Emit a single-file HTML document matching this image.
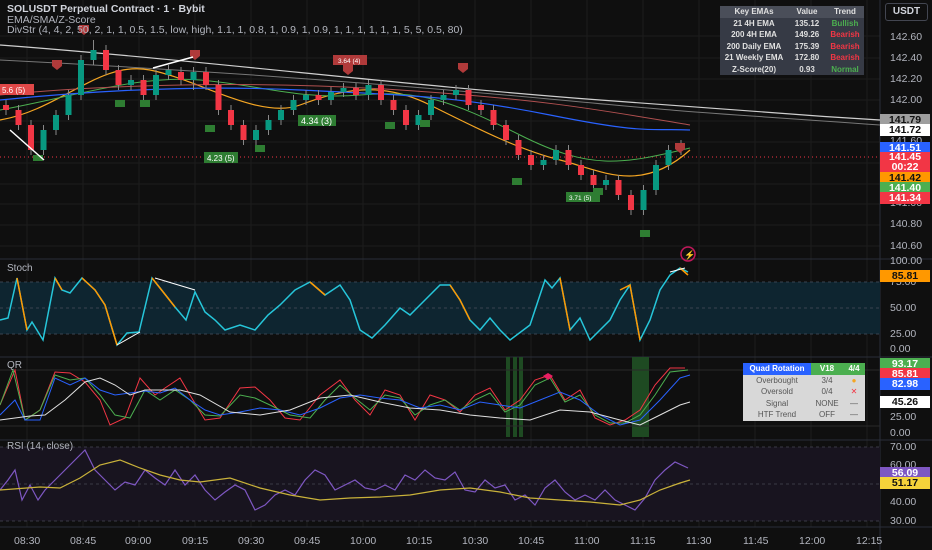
<!DOCTYPE html><html><head><meta charset="utf-8"><style>
body{margin:0;background:#0f0f0f;width:932px;height:550px;overflow:hidden;font-family:"Liberation Sans",sans-serif}
.t{position:absolute;color:#d1d4dc;white-space:nowrap;line-height:12px}
table{border-collapse:collapse;position:absolute;font-size:8px;font-weight:bold}
td{padding:0 3px;text-align:center;height:11.5px}
.pl{position:absolute;left:880px;width:50px;height:12px;font-size:10.5px;font-weight:bold;text-align:center;line-height:12px}
.ax{position:absolute;left:890px;font-size:10.5px;color:#b2b5be;line-height:12px}
.tx{position:absolute;top:535px;font-size:10.5px;color:#b2b5be;line-height:12px}
</style></head><body>
<svg width="932" height="550" style="position:absolute;left:0;top:0">
<g stroke="#1c1c1c" stroke-width="1">
<line x1="27" y1="0" x2="27" y2="527"/><line x1="83" y1="0" x2="83" y2="527"/><line x1="139" y1="0" x2="139" y2="527"/><line x1="195" y1="0" x2="195" y2="527"/><line x1="251" y1="0" x2="251" y2="527"/><line x1="307" y1="0" x2="307" y2="527"/><line x1="363" y1="0" x2="363" y2="527"/><line x1="419" y1="0" x2="419" y2="527"/><line x1="475" y1="0" x2="475" y2="527"/><line x1="531" y1="0" x2="531" y2="527"/><line x1="587" y1="0" x2="587" y2="527"/><line x1="643" y1="0" x2="643" y2="527"/><line x1="699" y1="0" x2="699" y2="527"/><line x1="755" y1="0" x2="755" y2="527"/><line x1="811" y1="0" x2="811" y2="527"/><line x1="867" y1="0" x2="867" y2="527"/>
<line x1="0" y1="36" x2="880" y2="36"/><line x1="0" y1="58" x2="880" y2="58"/><line x1="0" y1="79" x2="880" y2="79"/><line x1="0" y1="100" x2="880" y2="100"/><line x1="0" y1="121" x2="880" y2="121"/><line x1="0" y1="142" x2="880" y2="142"/><line x1="0" y1="163" x2="880" y2="163"/><line x1="0" y1="184" x2="880" y2="184"/><line x1="0" y1="204" x2="880" y2="204"/><line x1="0" y1="225" x2="880" y2="225"/><line x1="0" y1="246" x2="880" y2="246"/>
</g>
<g stroke="#2a2e39" stroke-width="1"><line x1="0" y1="259" x2="932" y2="259"/><line x1="0" y1="357" x2="932" y2="357"/><line x1="0" y1="440" x2="932" y2="440"/><line x1="0" y1="527" x2="932" y2="527"/><line x1="880" y1="0" x2="880" y2="550"/></g>
<rect x="0" y="282" width="880" height="52" fill="#0e2530"/>
<g stroke="#3a4450" stroke-dasharray="3,3"><line x1="0" y1="282" x2="880" y2="282"/><line x1="0" y1="308" x2="880" y2="308"/><line x1="0" y1="334" x2="880" y2="334"/></g>
<rect x="506" y="357" width="4" height="80" fill="#1e4a22"/><rect x="513" y="357" width="4" height="80" fill="#1e4a22"/><rect x="519" y="357" width="4" height="80" fill="#1e4a22"/><rect x="632" y="357" width="17" height="80" fill="#1e4a22"/>
<g stroke="#2a2a2a"><line x1="0" y1="370" x2="880" y2="370"/><line x1="0" y1="426" x2="880" y2="426"/></g>
<rect x="0" y="447" width="880" height="74" fill="#18141f"/>
<g stroke="#3a3a44" stroke-dasharray="3,3"><line x1="0" y1="447" x2="880" y2="447"/><line x1="0" y1="484" x2="880" y2="484"/><line x1="0" y1="521" x2="880" y2="521"/></g>
<line x1="0" y1="157" x2="880" y2="157" stroke="#f23645" stroke-dasharray="1,3"/>
<path d="M0 45 C200 60 400 85 600 100 S800 115 880 120" stroke="#cfcfcf" fill="none" stroke-width="1.2"/>
<path d="M0 60 C200 70 400 85 560 100 S700 112 880 125" stroke="#777" fill="none"/>
<path d="M0 120 C60 110 100 60 150 70 S260 120 300 105 S380 80 430 105 S520 150 560 160 S640 195 690 150" stroke="#f5a623" fill="none" stroke-width="1.2"/>
<path d="M0 110 C80 95 140 75 200 80 S300 100 360 95 S450 100 520 135 S620 165 690 148" stroke="#4caf50" fill="none"/>
<path d="M0 100 C100 90 200 85 300 90 S450 95 550 115 S650 128 690 130" stroke="#2962ff" fill="none" stroke-width="1.2"/>
<path d="M0 95 C100 85 250 80 400 90 S600 110 690 125" stroke="#b05050" fill="none"/>
<g stroke-width="1">
<path d="M6 100V115M18.5 105V130M31 120V155M43.5 125V155M56 110V135M68.5 90V120M81 55V100M93.5 40V65M106 45V75M118.5 65V90M131 75V90M143.5 75V100M156 70V100M168.5 65V80M181 67V85M193.5 67V90M206 67V90M218.5 80V115M231 105V130M243.5 120V145M256 125V145M268.5 115V135M281 105V125M293.5 95V115M306 90V105M318.5 90V105M331 87V105M343.5 83V97M356 83V100M368.5 80V100M381 80V105M393.5 95V115M406 105V130M418.5 110V130M431 95V120M443.5 90V105M456 85V100M468.5 85V110M481 100V115M493.5 105V130M506 120V145M518.5 135V160M531 150V170M543.5 155V170M556 145V165M568.5 145V170M581 160V180M593.5 170V190M606 175V190M618.5 175V200M631 190V215M643.5 185V215M656 160V195M668.5 145V170M681 140V155" stroke="#888"/>
</g>
<g fill="#f23645">
<rect x="3" y="105" width="6" height="5"/><rect x="15.5" y="110" width="6" height="15"/><rect x="28" y="125" width="6" height="25"/><rect x="103" y="50" width="6" height="20"/><rect x="115.5" y="70" width="6" height="15"/><rect x="140.5" y="80" width="6" height="15"/><rect x="178" y="72" width="6" height="8"/><rect x="203" y="72" width="6" height="13"/><rect x="215.5" y="85" width="6" height="25"/><rect x="228" y="110" width="6" height="15"/><rect x="240.5" y="125" width="6" height="15"/><rect x="315.5" y="95" width="6" height="5"/><rect x="353" y="88" width="6" height="7"/><rect x="378" y="85" width="6" height="15"/><rect x="390.5" y="100" width="6" height="10"/><rect x="403" y="110" width="6" height="15"/><rect x="465.5" y="90" width="6" height="15"/><rect x="478" y="105" width="6" height="5"/><rect x="490.5" y="110" width="6" height="15"/><rect x="503" y="125" width="6" height="15"/><rect x="515.5" y="140" width="6" height="15"/><rect x="528" y="155" width="6" height="10"/><rect x="565.5" y="150" width="6" height="15"/><rect x="578" y="165" width="6" height="10"/><rect x="590.5" y="175" width="6" height="10"/><rect x="615.5" y="180" width="6" height="15"/><rect x="628" y="195" width="6" height="15"/>
</g>
<g fill="#089981">
<rect x="40.5" y="130" width="6" height="20"/><rect x="53" y="115" width="6" height="15"/><rect x="65.5" y="95" width="6" height="20"/><rect x="78" y="60" width="6" height="35"/><rect x="90.5" y="50" width="6" height="10"/><rect x="128" y="80" width="6" height="5"/><rect x="153" y="75" width="6" height="20"/><rect x="165.5" y="70" width="6" height="5"/><rect x="190.5" y="72" width="6" height="8"/><rect x="253" y="130" width="6" height="10"/><rect x="265.5" y="120" width="6" height="10"/><rect x="278" y="110" width="6" height="10"/><rect x="290.5" y="100" width="6" height="10"/><rect x="303" y="95" width="6" height="5"/><rect x="328" y="92" width="6" height="8"/><rect x="340.5" y="88" width="6" height="4"/><rect x="365.5" y="85" width="6" height="10"/><rect x="415.5" y="115" width="6" height="10"/><rect x="428" y="100" width="6" height="15"/><rect x="440.5" y="95" width="6" height="5"/><rect x="453" y="90" width="6" height="5"/><rect x="540.5" y="160" width="6" height="5"/><rect x="553" y="150" width="6" height="10"/><rect x="603" y="180" width="6" height="5"/><rect x="640.5" y="190" width="6" height="20"/><rect x="653" y="165" width="6" height="25"/><rect x="665.5" y="150" width="6" height="15"/><rect x="678" y="145" width="6" height="5"/>
</g>
<g fill="#b03a3a"><path d="M79 25h10v6l-5 4-5-4z"/><path d="M52 60h10v6l-5 4-5-4z"/><path d="M190 50h10v6l-5 4-5-4z"/><path d="M343 65h10v6l-5 4-5-4z"/><path d="M458 63h10v6l-5 4-5-4z"/><path d="M675 143h10v6l-5 4-5-4z"/></g>
<g fill="#2e7d32"><path d="M33 155h10v6h-10z"/><path d="M115 100h10v7h-10z"/><path d="M140 100h10v7h-10z"/><path d="M205 125h10v7h-10z"/><path d="M255 145h10v7h-10z"/><path d="M385 122h10v7h-10z"/><path d="M512 178h10v7h-10z"/><path d="M593 188h10v7h-10z"/><path d="M640 230h10v7h-10z"/><path d="M420 120h10v7h-10z"/></g>
<polyline points="10,130 44,160" stroke="#fff" fill="none" stroke-width="1.5"/><polyline points="153,68 193,57" stroke="#fff" fill="none" stroke-width="1.5"/>
<rect x="0" y="84" width="34" height="11" fill="#e04848"/><rect x="204" y="152" width="34" height="11" fill="#2e7d32"/><rect x="298" y="115" width="38" height="11" fill="#2e7d32"/><rect x="333" y="55" width="34" height="10" fill="#b03a3a"/><rect x="566" y="192" width="34" height="10" fill="#2e7d32"/>
<text x="2" y="93" font-size="8" fill="#fff">5.6 (5)</text><text x="207" y="161" font-size="8" fill="#fff">4.23 (5)</text><text x="301" y="124" font-size="9" fill="#fff">4.34 (3)</text><text x="338" y="63" font-size="6.5" fill="#fff">3.64 (4)</text><text x="569" y="200" font-size="6.5" fill="#fff">3.71 (5)</text>
<circle cx="688" cy="254" r="7" fill="none" stroke="#c2185b" stroke-width="1.5"/><text x="684" y="258" font-size="9" fill="#e91e63">⚡</text>
<polyline points="0,320 8,318 17,278 27,330 32,322 43,340 55,278 62,290 70,293 82,278 95,290 105,305 117,345 127,333 139,332 152,278 160,288 175,307 186,320 195,292 205,312 215,320 225,330 240,325 255,330 268,315 280,305 295,290 310,282 325,295 340,285 350,300 360,330 372,338 385,325 400,308 410,315 425,300 440,285 450,285 460,300 470,320 480,330 490,318 500,330 510,340 530,325 545,280 552,288 560,278 570,330 580,318 590,340 600,330 610,320 620,300 630,285 640,340 650,320 660,290 670,275 680,268 688,272" stroke="#26c6da" stroke-width="1.5" fill="none"/>
<g stroke="#ff9800" stroke-width="1.5" fill="none"><polyline points="17,278 27,330"/><polyline points="55,278 62,290"/><polyline points="82,278 95,290 105,305 117,345"/><polyline points="152,278 160,288 175,307"/><polyline points="310,282 325,295"/><polyline points="450,285 460,300 470,320"/><polyline points="560,278 570,330"/><polyline points="620,290 630,285 640,340"/><polyline points="680,268 688,275"/></g>
<polyline points="117,345 140,332" stroke="#fff" fill="none"/><polyline points="155,278 195,290" stroke="#fff" fill="none"/><polyline points="670,272 685,268" stroke="#fff" fill="none"/>
<polyline points="0,405 15,370 25,420 40,410 55,372 70,373 85,382 100,400 110,425 125,418 140,378 155,395 165,388 180,378 190,395 205,420 220,418 240,388 255,387 270,400 285,418 300,420 320,395 340,380 355,400 370,415 385,390 400,395 415,420 430,395 445,400 460,412 475,395 490,388 505,410 520,400 535,380 550,375 565,400 580,390 595,418 610,425 625,420 640,410 655,385 670,368 685,368" stroke="#f23645" fill="none"/>
<polyline points="0,405 13,370 25,420 40,410 55,375 70,380 85,378 100,395 115,415 130,418 145,390 160,400 175,390 190,400 205,415 220,416 240,395 255,398 270,405 290,415 310,418 325,400 340,385 355,398 370,410 385,395 400,398 415,415 430,405 445,400 460,410 475,400 490,393 505,412 520,405 535,385 550,378 565,402 580,395 595,415 610,423 625,423 640,415 655,395 670,372 688,370" stroke="#4caf50" fill="none"/>
<polyline points="0,415 15,400 25,420 40,420 55,378 70,385 85,378 100,390 115,395 130,393 145,391 160,393 175,388 190,400 205,410 220,415 240,412 260,408 280,410 300,415 320,408 340,398 360,395 380,398 400,400 420,408 440,405 460,410 480,402 500,405 520,408 540,400 560,392 580,400 600,415 620,425 640,420 660,400 680,378 690,375" stroke="#2962ff" fill="none"/>
<polyline points="0,420 30,416 45,415 65,400 85,382 100,378 115,385 130,395 145,390 160,390 180,390 200,395 230,412 260,415 290,410 320,398 350,395 380,402 410,408 440,410 470,415 500,418 530,420 560,410 590,412 620,420 640,425 660,415 680,405 690,402" stroke="#e0e0e0" fill="none"/>
<path d="M543 376l5-3 5 3-5 4z" fill="#e91e63"/>
<polyline points="0,490 8,480 15,470 22,500 30,485 38,500 45,490 55,480 65,470 75,460 85,450 95,470 105,480 115,490 125,482 135,485 145,470 155,478 165,485 175,470 185,485 195,475 205,490 215,500 225,492 235,485 245,490 255,510 265,505 275,495 285,490 295,495 305,480 315,470 325,475 335,490 345,485 355,480 365,488 375,490 385,485 395,490 405,475 415,480 425,470 435,478 445,480 455,472 465,490 475,492 485,480 495,488 505,485 515,500 525,495 535,505 545,488 555,480 565,492 575,500 585,495 595,500 605,490 615,500 625,505 635,510 645,498 655,480 665,470 675,462 688,468" stroke="#7e57c2" fill="none" stroke-width="1.2"/>
<polyline points="0,490 40,487 60,488 80,478 100,465 120,460 140,468 160,475 180,480 200,482 230,478 260,488 290,495 320,500 350,498 380,497 410,495 440,490 470,488 500,492 530,498 560,500 590,502 620,505 640,500 660,490 680,483 690,480" stroke="#c9b23a" fill="none" stroke-width="1.2"/>
</svg>
<div class="t" style="left:7px;top:3px;font-size:10.5px;font-weight:bold">SOLUSDT Perpetual Contract · 1 · Bybit</div>
<div class="t" style="left:7px;top:14px;font-size:10.5px;color:#b2b5be">EMA/SMA/Z-Score</div>
<div class="t" style="left:7px;top:24px;font-size:10.5px;color:#b2b5be">DivStr (4, 4, 2, 50, 2, 1, 1, 0.5, 1.5, low, high, 1.1, 1, 0.8, 1, 0.9, 1, 0.9, 1, 1, 1, 1, 1, 1, 5, 5, 0.5, 80)</div>
<div class="t" style="left:7px;top:263px;font-size:10px;color:#b2b5be">Stoch</div>
<div class="t" style="left:7px;top:360px;font-size:10px;color:#b2b5be">QR</div>
<div class="t" style="left:7px;top:441px;font-size:10px;color:#b2b5be">RSI (14, close)</div>
<table style="left:720px;top:6px;background:#363a45;color:#e0e0e0">
<tr style="background:#4a4e59"><td style="width:62px">Key EMAs</td><td style="width:32px">Value</td><td style="width:32px">Trend</td></tr>
<tr><td>21 4H EMA</td><td>135.12</td><td style="color:#4caf50">Bullish</td></tr>
<tr><td>200 4H EMA</td><td>149.26</td><td style="color:#f23645">Bearish</td></tr>
<tr><td>200 Daily EMA</td><td>175.39</td><td style="color:#f23645">Bearish</td></tr>
<tr><td>21 Weekly EMA</td><td>172.80</td><td style="color:#f23645">Bearish</td></tr>
<tr><td>Z-Score(20)</td><td>0.93</td><td style="color:#4caf50">Normal</td></tr>
</table>
<table style="left:743px;top:363px;background:#d8d8d8;color:#555;font-weight:normal">
<tr style="font-weight:bold;color:#fff"><td style="background:#2962ff;width:62px">Quad Rotation</td><td style="background:#4caf50;width:26px">V18</td><td style="background:#4caf50;width:16px">4/4</td></tr>
<tr><td>Overbought</td><td>3/4</td><td style="color:#f5a623">●</td></tr>
<tr><td>Oversold</td><td>0/4</td><td style="color:#f23645">✕</td></tr>
<tr><td>Signal</td><td>NONE</td><td>—</td></tr>
<tr><td>HTF Trend</td><td>OFF</td><td>—</td></tr>
</table>
<div style="position:absolute;left:885px;top:3px;width:41px;height:16px;border:1px solid #434651;border-radius:3px;color:#d1d4dc;font-size:10px;font-weight:bold;text-align:center;line-height:16px">USDT</div>
<div class="ax" style="top:31px">142.60</div><div class="ax" style="top:52px">142.40</div><div class="ax" style="top:73px">142.20</div><div class="ax" style="top:94px">142.00</div><div class="ax" style="top:135px">141.60</div><div class="ax" style="top:197px">141.00</div><div class="ax" style="top:218px">140.80</div><div class="ax" style="top:240px">140.60</div>
<div class="pl" style="top:114px;background:#9e9e9e;color:#111">141.79</div>
<div class="pl" style="top:124px;background:#fff;color:#111">141.72</div>
<div class="pl" style="top:142px;background:#2962ff;color:#fff">141.51</div>
<div class="pl" style="top:152px;height:20px;background:#f23645;color:#fff;line-height:10px">141.45<br>00:22</div>
<div class="pl" style="top:172px;background:#ff9800;color:#111">141.42</div>
<div class="pl" style="top:182px;background:#4caf50;color:#fff">141.40</div>
<div class="pl" style="top:192px;background:#f23645;color:#fff">141.34</div>
<div class="ax" style="top:255px">100.00</div><div class="ax" style="top:276px">75.00</div><div class="ax" style="top:302px">50.00</div><div class="ax" style="top:328px">25.00</div><div class="ax" style="top:343px">0.00</div>
<div class="pl" style="top:270px;background:#ff9800;color:#111">85.81</div>
<div class="pl" style="top:358px;background:#4caf50;color:#fff">93.17</div>
<div class="pl" style="top:368px;background:#f23645;color:#fff">85.81</div>
<div class="pl" style="top:378px;background:#2962ff;color:#fff">82.98</div>
<div class="pl" style="top:396px;background:#fff;color:#111">45.26</div>
<div class="ax" style="top:411px">25.00</div><div class="ax" style="top:427px">0.00</div>
<div class="ax" style="top:441px">70.00</div><div class="ax" style="top:459px">60.00</div><div class="ax" style="top:496px">40.00</div><div class="ax" style="top:515px">30.00</div>
<div class="pl" style="top:467px;background:#7e57c2;color:#fff">56.09</div>
<div class="pl" style="top:477px;background:#f5d33a;color:#111">51.17</div>
<div class="tx" style="left:14px">08:30</div><div class="tx" style="left:70px">08:45</div><div class="tx" style="left:125px">09:00</div><div class="tx" style="left:182px">09:15</div><div class="tx" style="left:238px">09:30</div><div class="tx" style="left:294px">09:45</div><div class="tx" style="left:350px">10:00</div><div class="tx" style="left:406px">10:15</div><div class="tx" style="left:462px">10:30</div><div class="tx" style="left:518px">10:45</div><div class="tx" style="left:574px">11:00</div><div class="tx" style="left:630px">11:15</div><div class="tx" style="left:686px">11:30</div><div class="tx" style="left:743px">11:45</div><div class="tx" style="left:799px">12:00</div><div class="tx" style="left:856px">12:15</div>
</body></html>
